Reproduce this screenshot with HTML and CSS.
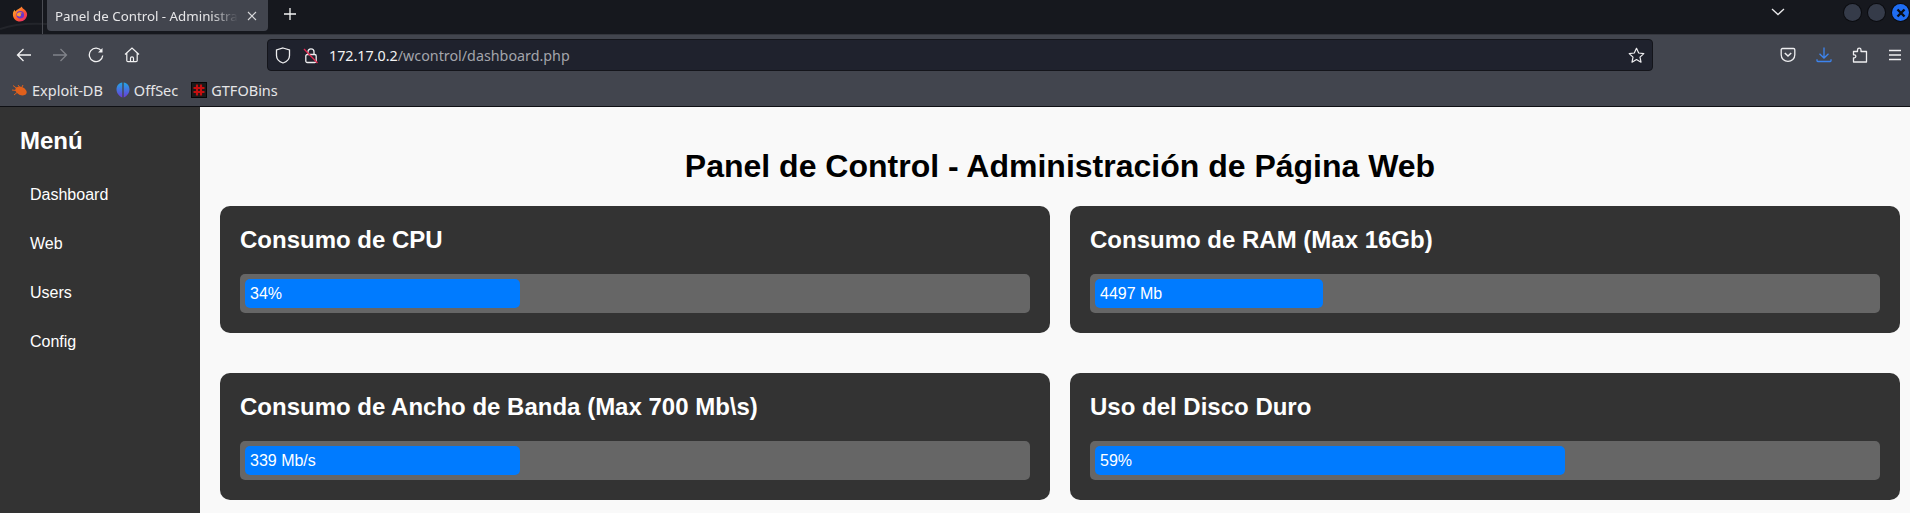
FILE: index.html
```html
<!DOCTYPE html>
<html lang="es">
<head>
<meta charset="utf-8">
<title>Panel de Control - Administración de Página Web</title>
<link rel="stylesheet" href="styles.css">
</head>
<body>
<header class="browser">
  <div class="tabbar">
    <svg class="swoosh" width="47" height="35" viewBox="0 0 47 35"><path d="M0 29C14 24 30 23 47 24" fill="none" stroke="#23252b" stroke-width="2"/></svg>
    <div class="ff-slot">
      <svg width="16" height="16" viewBox="0 0 18 18"><defs><linearGradient id="ffg" x1="0" y1="0" x2="1" y2="1"><stop offset="0" stop-color="#ffbd2e"/><stop offset=".55" stop-color="#ff5a2c"/><stop offset="1" stop-color="#e31587"/></linearGradient></defs><path d="M11 .5c.4 2 2 2.500 3.200 3.600C16 5.800 17 7.400 17 9.400 17 14 13.400 17.500 9 17.500S1 14 1 9.500c0-2 .8-3.900 2-5.200.1 1 .5 1.600 1.100 2C4.700 3.700 8.500 3.500 11 .5Z" fill="url(#ffg)"/><circle cx="9.300" cy="9.800" r="4.300" fill="#6a35c9"/><path d="M6 8.200c1.500-1.600 4.800-1.600 6 .3-1.300-.6-2.400-.3-2.700.3 1.200.4 1.200 2 0 2.700-1.400.7-3 .1-3.700-1C5.400 9.800 5.600 8.800 6 8.200Z" fill="#ff9d32"/></svg>
    </div>
    <div class="tab">
      <span class="tab-title">Panel de Control - Administra</span>
      <svg class="tab-x" width="10" height="10" viewBox="0 0 10 10"><path d="M1 1l8 8M9 1l-8 8" stroke="#d7d8da" stroke-width="1.100" fill="none"/></svg>
    </div>
    <svg class="new-tab" width="12" height="12" viewBox="0 0 12 12"><path d="M6 0v12M0 6h12" stroke="#f4f4f5" stroke-width="1.300" fill="none"/></svg>
    <svg class="tabs-menu" width="14" height="8" viewBox="0 0 14 8"><path d="M1 1l6 5.500L13 1" stroke="#e8e8ea" stroke-width="1.300" fill="none"/></svg>
    <div class="winbtns">
      <span class="winbtn"></span>
      <span class="winbtn"></span>
      <span class="winbtn winbtn-close"><svg width="10" height="10" viewBox="0 0 10 10"><path d="M1.500 1.500l7 7M8.500 1.500l-7 7" stroke="#0a0d14" stroke-width="2.400" fill="none"/></svg></span>
    </div>
  </div>

  <div class="navbar">
    <svg class="nav-icon" width="16" height="16" viewBox="0 0 16 16"><path d="M15 8H1.500M7.500 2L1.500 8l6 6" stroke="#f2f2f3" stroke-width="1.300" fill="none"/></svg>
    <svg class="nav-icon" width="16" height="16" viewBox="0 0 16 16"><path d="M1 8h13.500M8.500 2l6 6-6 6" stroke="#80838a" stroke-width="1.300" fill="none"/></svg>
    <svg class="nav-icon" width="16" height="16" viewBox="0 0 16 16"><path d="M13.600 4.200A6.700 6.700 0 1 0 14.700 8.500" stroke="#f2f2f3" stroke-width="1.300" fill="none"/><path d="M14.500 1v4.500H10" fill="#f2f2f3"/></svg>
    <svg class="nav-icon" width="16" height="16" viewBox="0 0 16 16"><path d="M1 7.500L8 1l7 6.500M2.800 6.300v7.200c0 .8.500 1.200 1.200 1.200h8c.700 0 1.200-.4 1.200-1.200V6.300M6.500 14.500v-3.300c0-1.800 3-1.800 3 0v3.300" stroke="#f2f2f3" stroke-width="1.200" fill="none"/></svg>
    <div class="urlbar">
      <svg class="url-icon" width="16" height="17" viewBox="0 0 16 17"><path d="M8 1l6.500 2v5.500c0 3.500-2.800 6.300-6.500 7.500-3.700-1.200-6.500-4-6.500-7.500V3Z" stroke="#eeeef0" stroke-width="1.300" fill="none"/></svg>
      <svg class="url-icon" width="16" height="17" viewBox="0 0 16 17"><path d="M5 7.500V4.800C5 1 11 1 11 4.800v2.700" stroke="#eeeef0" stroke-width="1.300" fill="none"/><rect x="2.800" y="7.500" width="10.400" height="8" rx="1.500" stroke="#eeeef0" stroke-width="1.300" fill="none"/><path d="M1 2l13.500 14" stroke="#e22850" stroke-width="1.300"/></svg>
      <span class="url"><span class="url-host">172.17.0.2</span>/wcontrol/dashboard.php</span>
      <svg class="url-star" width="17" height="17" viewBox="0 0 17 17"><path d="M8.500 1.300l2.200 4.700 5.100.6-3.800 3.500 1 5.100-4.500-2.600L4 15.200l1-5.100L1.200 6.600 6.300 6Z" stroke="#eeeef0" stroke-width="1.200" stroke-linejoin="round" fill="none"/></svg>
    </div>
    <div class="toolbar-right">
      <svg width="16" height="16" viewBox="0 0 16 16"><path d="M2.500 1.500h11c.8 0 1.300.5 1.300 1.300v5c0 3.700-3 6.500-6.800 6.500S1.200 11.500 1.200 7.800v-5c0-.8.500-1.300 1.300-1.300Z" stroke="#eeeef0" stroke-width="1.300" fill="none"/><path d="M4.800 6L8 9l3.200-3" stroke="#eeeef0" stroke-width="1.500" fill="none"/></svg>
      <svg width="16" height="16" viewBox="0 0 16 16"><path d="M8 .5v10.500M3.500 6.800L8 11l4.500-4.200M1 12.300v1.400c0 .5.300.8.800.8h12.400c.5 0 .8-.3.800-.8v-1.400" stroke="#3d84ee" stroke-width="1.300" fill="none"/></svg>
      <svg width="16" height="16" viewBox="0 0 16 16"><path d="M1.500 15V10.800h1c1.800 0 1.800-3 0-3h-1V4.500h4V3c0-2.400 3.500-2.400 3.500 0v1.500h5.500v10.500Z" stroke="#eeeef0" stroke-width="1.300" stroke-linejoin="round" fill="none"/></svg>
      <svg class="hamburger" width="14" height="12" viewBox="0 0 14 12"><path d="M1 1.500h12M1 6h12M1 10.500h12" stroke="#eeeef0" stroke-width="1.300" fill="none"/></svg>
    </div>
  </div>

  <nav class="bookmarks">
    <a class="bookmark">
      <svg width="16" height="16" viewBox="0 0 16 16"><path d="M1 3.500L5 6.500M0 8l4 .5M2 13l3-2.500M6 3l1.500 2M11 3l-1 2" stroke="#e0601c" stroke-width="1"/><ellipse cx="9" cy="9" rx="6" ry="4" transform="rotate(25 9 9)" fill="#e0601c"/></svg>
      Exploit-DB
    </a>
    <a class="bookmark">
      <svg width="14" height="16" viewBox="0 0 14 16"><defs><linearGradient id="osg" x1="0" y1="0" x2="0" y2="1"><stop offset="0" stop-color="#22a6e6"/><stop offset="1" stop-color="#6a3cd8"/></linearGradient></defs><path d="M6.300 .5C2.800 1 .5 3.800.5 7.500c0 3.500 2.500 6.700 5.800 8ZM7.700 .5c3.500.5 5.800 3.300 5.800 7 0 3.500-2.500 6.700-5.800 8Z" fill="url(#osg)"/></svg>
      OffSec
    </a>
    <a class="bookmark">
      <svg width="16" height="16" viewBox="0 0 16 16"><rect x=".5" y=".5" width="15" height="15" fill="#1a1a1a" stroke="#050505"/><path d="M6 2.500v11M10 2.500v11M2.500 6h11M2.500 10h11" stroke="#c40f0f" stroke-width="2.200"/></svg>
      GTFOBins
    </a>
  </nav>
</header>

<div class="page">
  <aside class="sidebar">
    <h2 class="sidebar-title">Menú</h2>
    <ul class="menu">
      <li><a class="menu-link">Dashboard</a></li>
      <li><a class="menu-link">Web</a></li>
      <li><a class="menu-link">Users</a></li>
      <li><a class="menu-link">Config</a></li>
    </ul>
  </aside>
  <main class="main">
    <h1 class="page-title">Panel de Control - Administración de Página Web</h1>
    <section class="cards">
      <article class="card">
        <h2 class="card-title">Consumo de CPU</h2>
        <div class="bar"><div class="fill" style="width:34%">34%</div></div>
      </article>
      <article class="card">
        <h2 class="card-title">Consumo de RAM (Max 16Gb)</h2>
        <div class="bar"><div class="fill" style="width:28%">4497 Mb</div></div>
      </article>
      <article class="card">
        <h2 class="card-title">Consumo de Ancho de Banda (Max 700 Mb\s)</h2>
        <div class="bar"><div class="fill" style="width:34%">339 Mb/s</div></div>
      </article>
      <article class="card">
        <h2 class="card-title">Uso del Disco Duro</h2>
        <div class="bar"><div class="fill" style="width:59%">59%</div></div>
      </article>
    </section>
  </main>
</div>
</body>
</html>
```
FILE: styles.css
```css
* { box-sizing: border-box; }

html, body {
  margin: 0;
  height: 513px;
  overflow: hidden;
}

body {
  display: flex;
  flex-direction: column;
  font-family: "Liberation Sans", Arial, sans-serif;
  background: #f9f9f9;
}

/* Browser chrome */
.browser {
  flex: none;
  font-family: "Noto Sans", sans-serif;
  color: #f2f2f3;
  background: #42454e;
  border-bottom: 1px solid #0f1014;
}

.tabbar {
  position: relative;
  height: 35px;
  display: flex;
  align-items: flex-start;
  background: #16181e;
  border-bottom: 1px solid #34363d;
}

.swoosh {
  position: absolute;
  left: 0;
  top: 0;
}

.ff-slot {
  position: relative;
  width: 43px;
  height: 34px;
  padding: 5px 0 0 12px;
  border-right: 1px solid #4a4c53;
}

.tab {
  position: relative;
  width: 221px;
  height: 31px;
  margin-left: 4px;
  padding: 0 11px 0 8px;
  display: flex;
  align-items: center;
  justify-content: space-between;
  background: #42454e;
  border-radius: 0 0 4px 4px;
}

.tab-title {
  font-size: 13.300px;
  white-space: nowrap;
  color: #e6e6e8;
  -webkit-mask-image: linear-gradient(to right, #000 85%, transparent);
  mask-image: linear-gradient(to right, #000 85%, transparent);
}

.new-tab {
  position: relative;
  margin: 8px 0 0 16px;
}

.tabs-menu {
  position: relative;
  margin: 8px 0 0 1475px;
}

.winbtns {
  position: relative;
  margin: 4px 1px 0 auto;
  display: flex;
  gap: 7px;
}

.winbtn {
  width: 17px;
  height: 17px;
  border-radius: 50%;
  background: #353b49;
  box-shadow: 0 0 0 1px #0b0c10;
  display: flex;
  align-items: center;
  justify-content: center;
}

.winbtn-close {
  background: #1f6df2;
}

.navbar {
  height: 36px;
  padding-top: 4px;
  display: flex;
  align-items: flex-start;
}

.nav-icon {
  flex: none;
  margin: 8px 4px 0 16px;
}

.urlbar {
  flex: none;
  width: 1386px;
  height: 32px;
  margin-left: 123px;
  padding: 0 7px 0 7px;
  display: flex;
  align-items: center;
  gap: 12px;
  background: #1f222d;
  border: 1px solid #14151b;
  border-radius: 4px;
}

.url-icon {
  flex: none;
}

.url {
  flex: 1;
  margin-left: -2px;
  font-size: 14.300px;
  color: #a3a5ab;
  white-space: nowrap;
}

.url-host {
  color: #f2f2f3;
}

.toolbar-right {
  flex: 1;
  padding: 8px 7px 0 127px;
  display: flex;
  align-items: flex-start;
  gap: 20px;
}

.hamburger {
  margin-top: 2px;
}

.bookmarks {
  height: 35px;
  padding: 3px 0 0 12px;
  display: flex;
  align-items: center;
  gap: 13px;
}

.bookmark {
  display: flex;
  align-items: center;
  gap: 4px;
  font-size: 14.500px;
  color: #e6e6e8;
}

/* Page */
.page {
  flex: 1;
  display: flex;
  min-height: 0;
}

.sidebar {
  flex: none;
  width: 200px;
  padding: 20px;
  background: #333;
  color: #fff;
}

.sidebar-title {
  margin: 0 0 19.920px;
  font-size: 24px;
  line-height: 28px;
}

.menu {
  margin: 0;
  padding: 0;
  list-style: none;
}

.menu li {
  margin-bottom: 10px;
}

.menu-link {
  display: block;
  padding: 10px;
  font-size: 16px;
  line-height: 19px;
  color: #fff;
}

.main {
  flex: 1;
  min-width: 0;
  padding: 20px 10px 0 20px;
  background: #f9f9f9;
}

.page-title {
  margin: 21px 0;
  font-size: 32px;
  line-height: 37px;
  text-align: center;
  color: #000;
}

.cards {
  display: grid;
  grid-template-columns: 1fr 1fr;
  gap: 40px 20px;
}

.card {
  padding: 20px;
  background: #333;
  color: #fff;
  border-radius: 10px;
}

.card-title {
  margin: 0 0 19.920px;
  font-size: 24px;
  line-height: 28px;
}

.bar {
  padding: 5px;
  background: #666;
  border-radius: 5px;
}

.fill {
  box-sizing: content-box;
  padding: 5px;
  font-size: 16px;
  line-height: 19px;
  color: #fff;
  background: #007bff;
  border-radius: 5px;
}
```
